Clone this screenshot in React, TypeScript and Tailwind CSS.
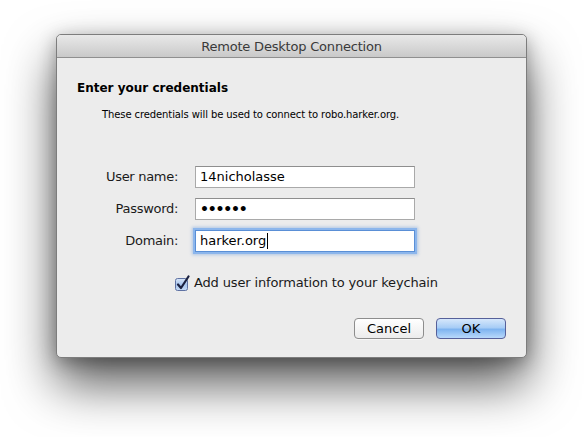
import React from "react";

const font = { fontFamily: '"DejaVu Sans", "Liberation Sans", sans-serif' };

function Field({ label, children, focused }: { label: string; children: React.ReactNode; focused?: boolean }) {
  return (
    <div className="flex items-center h-[22px]">
      <div className="w-[102px] text-right text-[13px] tracking-[-0.3px] text-[#1a1a1a] pr-[1px]">{label}</div>
      <div
        className={
          "ml-[16px] w-[220px] h-[22px] bg-white flex items-center pl-[4px] text-[13px] text-black border " +
          (focused
            ? "border-[#5a8fd6] shadow-[0_0_0_2px_#8cb6ec,0_0_3px_3px_rgba(100,150,220,0.45)]"
            : "border-[#a9a9a9] border-t-[#8e8e8e]")
        }
      >
        {children}
      </div>
    </div>
  );
}

export default function App() {
  return (
    <div className="w-[584px] h-[437px] bg-white overflow-hidden pt-[34px] pl-[56px]" style={font}>
      <div className="w-[471px] h-[324px] bg-[#ececec] rounded-[5px] border border-[#7d7d7d] shadow-[0_26px_50px_rgba(0,0,0,0.65),0_4px_18px_rgba(0,0,0,0.3)] flex flex-col overflow-hidden">
        <div className="h-[23px] shrink-0 bg-gradient-to-b from-[#e9e9e9] to-[#c9c9c9] border-b border-[#8f8f8f] flex items-center justify-center rounded-t-[4px]">
          <span className="text-[13px] tracking-[-0.2px] text-[#3a3a3a] leading-none">Remote Desktop Connection</span>
        </div>
        <div className="flex-1 flex flex-col pl-[20px] pr-[19px] pt-[22px]">
          <div className="text-[12px] font-bold text-black leading-[16px]">Enter your credentials</div>
          <div className="mt-[12px] ml-[25px] text-[10px] tracking-[-0.1px] text-black leading-[14px]">
            These credentials will be used to connect to robo.harker.org.
          </div>
          <div className="mt-[44px] flex flex-col gap-[10px]">
            <Field label="User name:">14nicholasse</Field>
            <Field label="Password:">
              <span className="text-[14px] tracking-[-1.2px] font-bold leading-none">••••••</span>
            </Field>
            <Field label="Domain:" focused>
              harker.org<span className="inline-block w-[1px] h-[16px] bg-black ml-[1px]" />
            </Field>
          </div>
          <div className="mt-[23px] ml-[98px] flex items-center h-[16px]">
            <svg width="16" height="16" viewBox="0 0 16 16" className="mr-[3px]">
              <defs>
                <linearGradient id="cb" x1="0" y1="0" x2="0" y2="1">
                  <stop offset="0" stopColor="#d9e6f8" />
                  <stop offset="0.5" stopColor="#a9c6ee" />
                  <stop offset="1" stopColor="#c6dbf6" />
                </linearGradient>
              </defs>
              <rect x="0.5" y="3.5" width="12" height="12" rx="2" fill="url(#cb)" stroke="#5f72a3" />
              <path d="M3 9.5 L6 13 L13.5 1.5" fill="none" stroke="#1b2140" strokeWidth="2.2" strokeLinecap="round" strokeLinejoin="round" />
            </svg>
            <span className="text-[13px] tracking-[-0.15px] text-[#1a1a1a]">Add user information to your keychain</span>
          </div>
          <div className="mt-[27px] flex justify-end gap-[12px] pr-[1px]">
            <button className="w-[70px] h-[21px] rounded-[4px] border border-[#8d8d8d] bg-gradient-to-b from-white to-[#ececec] text-[13px] text-black leading-none shadow-[0_1px_0_rgba(255,255,255,0.6)]">
              Cancel
            </button>
            <button className="w-[70px] h-[21px] rounded-[4px] border border-[#56609a] bg-[linear-gradient(to_bottom,#d6e7fb_0%,#a8cdf6_45%,#7fb4f0_55%,#b9d9fb_100%)] text-[13px] text-black leading-none">
              OK
            </button>
          </div>
        </div>
      </div>
    </div>
  );
}
